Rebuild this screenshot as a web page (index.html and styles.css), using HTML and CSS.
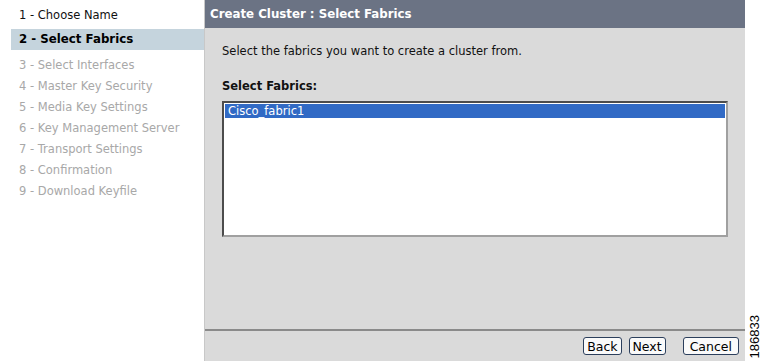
FILE: index.html
```html
<!DOCTYPE html>
<html lang="en">
<head>
    <meta charset="UTF-8">
    <title>Create Cluster</title>
    <link rel="stylesheet" href="styles.css">
</head>
<body>
    <div class="wizard">
        <!-- Étapes -->
        <ul class="steps">
            <li class="step done">1 - Choose Name</li>
            <li class="step active">2 - Select Fabrics</li>
            <li class="step">3 - Select Interfaces</li>
            <li class="step">4 - Master Key Security</li>
            <li class="step">5 - Media Key Settings</li>
            <li class="step">6 - Key Management Server</li>
            <li class="step">7 - Transport Settings</li>
            <li class="step">8 - Confirmation</li>
            <li class="step">9 - Download Keyfile</li>
        </ul>

        <!-- Panneau principal -->
        <div class="panel">
            <div class="panel-header">Create Cluster : Select Fabrics</div>
            <div class="panel-body">
                <p class="intro">Select the fabrics you want to create a cluster from.</p>
                <div class="field-label">Select Fabrics:</div>
                <div class="listbox">
                    <div class="list-item selected">Cisco_fabric1</div>
                </div>
            </div>
            <div class="panel-footer">
                <button class="btn">Back</button>
                <button class="btn">Next</button>
                <button class="btn btn-cancel">Cancel</button>
            </div>
        </div>

        <div class="fig-id"><span>186833</span></div>
    </div>
</body>
</html>
```
FILE: styles.css
```css
body {
    margin: 0;
    padding: 0;
    background: #fff;
    font-family: Verdana, 'DejaVu Sans', sans-serif;
    font-size: 11.5px;
}

.wizard {
    display: flex;
    height: 361px;
}

.steps {
    list-style: none;
    margin: 0;
    padding: 5px 0 0 11px;
    width: 193px;
    flex-shrink: 0;
}

.step {
    height: 21px;
    line-height: 21px;
    padding-left: 8px;
    color: #a8a8a8;
    white-space: nowrap;
}

.step.done {
    color: #111;
}

.step.active {
    background: #c5d4dd;
    color: #000;
    font-weight: bold;
    font-size: 11.8px;
    margin: 3px 0 5px 0;
}

.panel {
    width: 540px;
    display: flex;
    flex-direction: column;
    background: #dadada;
    border-left: 1px solid #c8c8c8;
}

.panel-header {
    background: #6b7384;
    color: #fff;
    font-weight: bold;
    font-size: 11.8px;
    height: 28px;
    line-height: 28px;
    padding-left: 5px;
}

.panel-body {
    flex: 1;
    padding: 0 17px;
    line-height: 14px;
}

.intro {
    margin: 16px 0 21px 0;
    color: #111;
}

.field-label {
    font-weight: bold;
    color: #111;
    margin-bottom: 8px;
}

.listbox {
    height: 130px;
    background: #fff;
    border: 2px inset #a0a0a0;
    padding: 1px;
}

.list-item {
    height: 14px;
    line-height: 14px;
    padding-left: 3px;
    color: #111;
}

.list-item.selected {
    background: #316ac5;
    color: #fff;
}

.panel-footer {
    border-top: 2px solid #8a8a8a;
    height: 30px;
    display: flex;
    align-items: center;
    justify-content: flex-end;
    gap: 7px;
    padding-right: 6px;
}

.btn {
    font-family: Verdana, 'DejaVu Sans', sans-serif;
    font-size: 12.5px;
    background: #fafafa;
    border: 1px solid #2c3f5c;
    border-radius: 3px;
    padding: 0 3px;
    height: 18px;
    color: #000;
}

.btn-cancel {
    margin-left: 10px;
    padding: 0 6px;
}

.fig-id {
    flex: 1;
    display: flex;
    align-items: flex-end;
    justify-content: center;
    padding-bottom: 3px;
}

.fig-id span {
    writing-mode: vertical-rl;
    transform: rotate(180deg);
    font-family: Arial, 'Liberation Sans', sans-serif;
    font-size: 13px;
    color: #000;
}
```
